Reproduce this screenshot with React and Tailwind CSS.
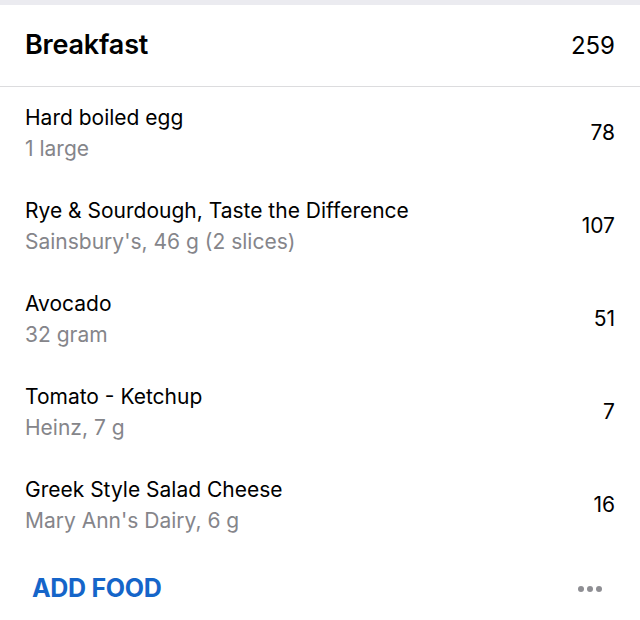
import React from 'react';

const foods = [
    { name: 'Hard boiled egg', detail: '1 large', kcal: 78 },
    { name: 'Rye & Sourdough, Taste the Difference', detail: "Sainsbury's, 46 g (2 slices)", kcal: 107 },
    { name: 'Avocado', detail: '32 gram', kcal: 51 },
    { name: 'Tomato - Ketchup', detail: 'Heinz, 7 g', kcal: 7 },
    { name: 'Greek Style Salad Cheese', detail: "Mary Ann's Dairy, 6 g", kcal: 16 },
];

const FoodRow = ({ food }) => (
    <div className="flex items-center justify-between h-[93px] pl-[25px] pr-[25px] pb-[2px]">
        <div className="flex flex-col">
            <span className="text-[21px] leading-[31px] text-black">{food.name}</span>
            <span className="text-[21px] leading-[31px] text-[#85858a]">{food.detail}</span>
        </div>
        <span className="text-[21px] text-black">{food.kcal}</span>
    </div>
);

export default function App() {
    const total = foods.reduce((sum, f) => sum + f.kcal, 0);

    return (
        <div className="w-[640px] h-[620px] bg-white overflow-hidden" style={{ fontFamily: 'Inter, "Noto Sans", sans-serif' }}>
            <div className="h-[5px] bg-[#ebebf0]" />
            <div className="flex items-center justify-between h-[82px] px-[25px] border-b border-[#dcdcde]">
                <h2 className="text-[27px] font-semibold text-black tracking-[-0.2px]">Breakfast</h2>
                <span className="text-[24px] text-black">{total}</span>
            </div>

            <div>
                {foods.map((food) => (
                    <FoodRow key={food.name} food={food} />
                ))}
            </div>

            <div className="flex items-center justify-between h-[74px] pl-[32px] pr-[38px]">
                <button type="button" className="text-[25px] font-bold text-[#1565c9] tracking-[-0.3px]">
                    ADD FOOD
                </button>
                <span className="flex gap-[3px]">
                    <span className="w-[6px] h-[6px] rounded-full bg-[#8e8e93]" />
                    <span className="w-[6px] h-[6px] rounded-full bg-[#8e8e93]" />
                    <span className="w-[6px] h-[6px] rounded-full bg-[#8e8e93]" />
                </span>
            </div>
        </div>
    );
}
